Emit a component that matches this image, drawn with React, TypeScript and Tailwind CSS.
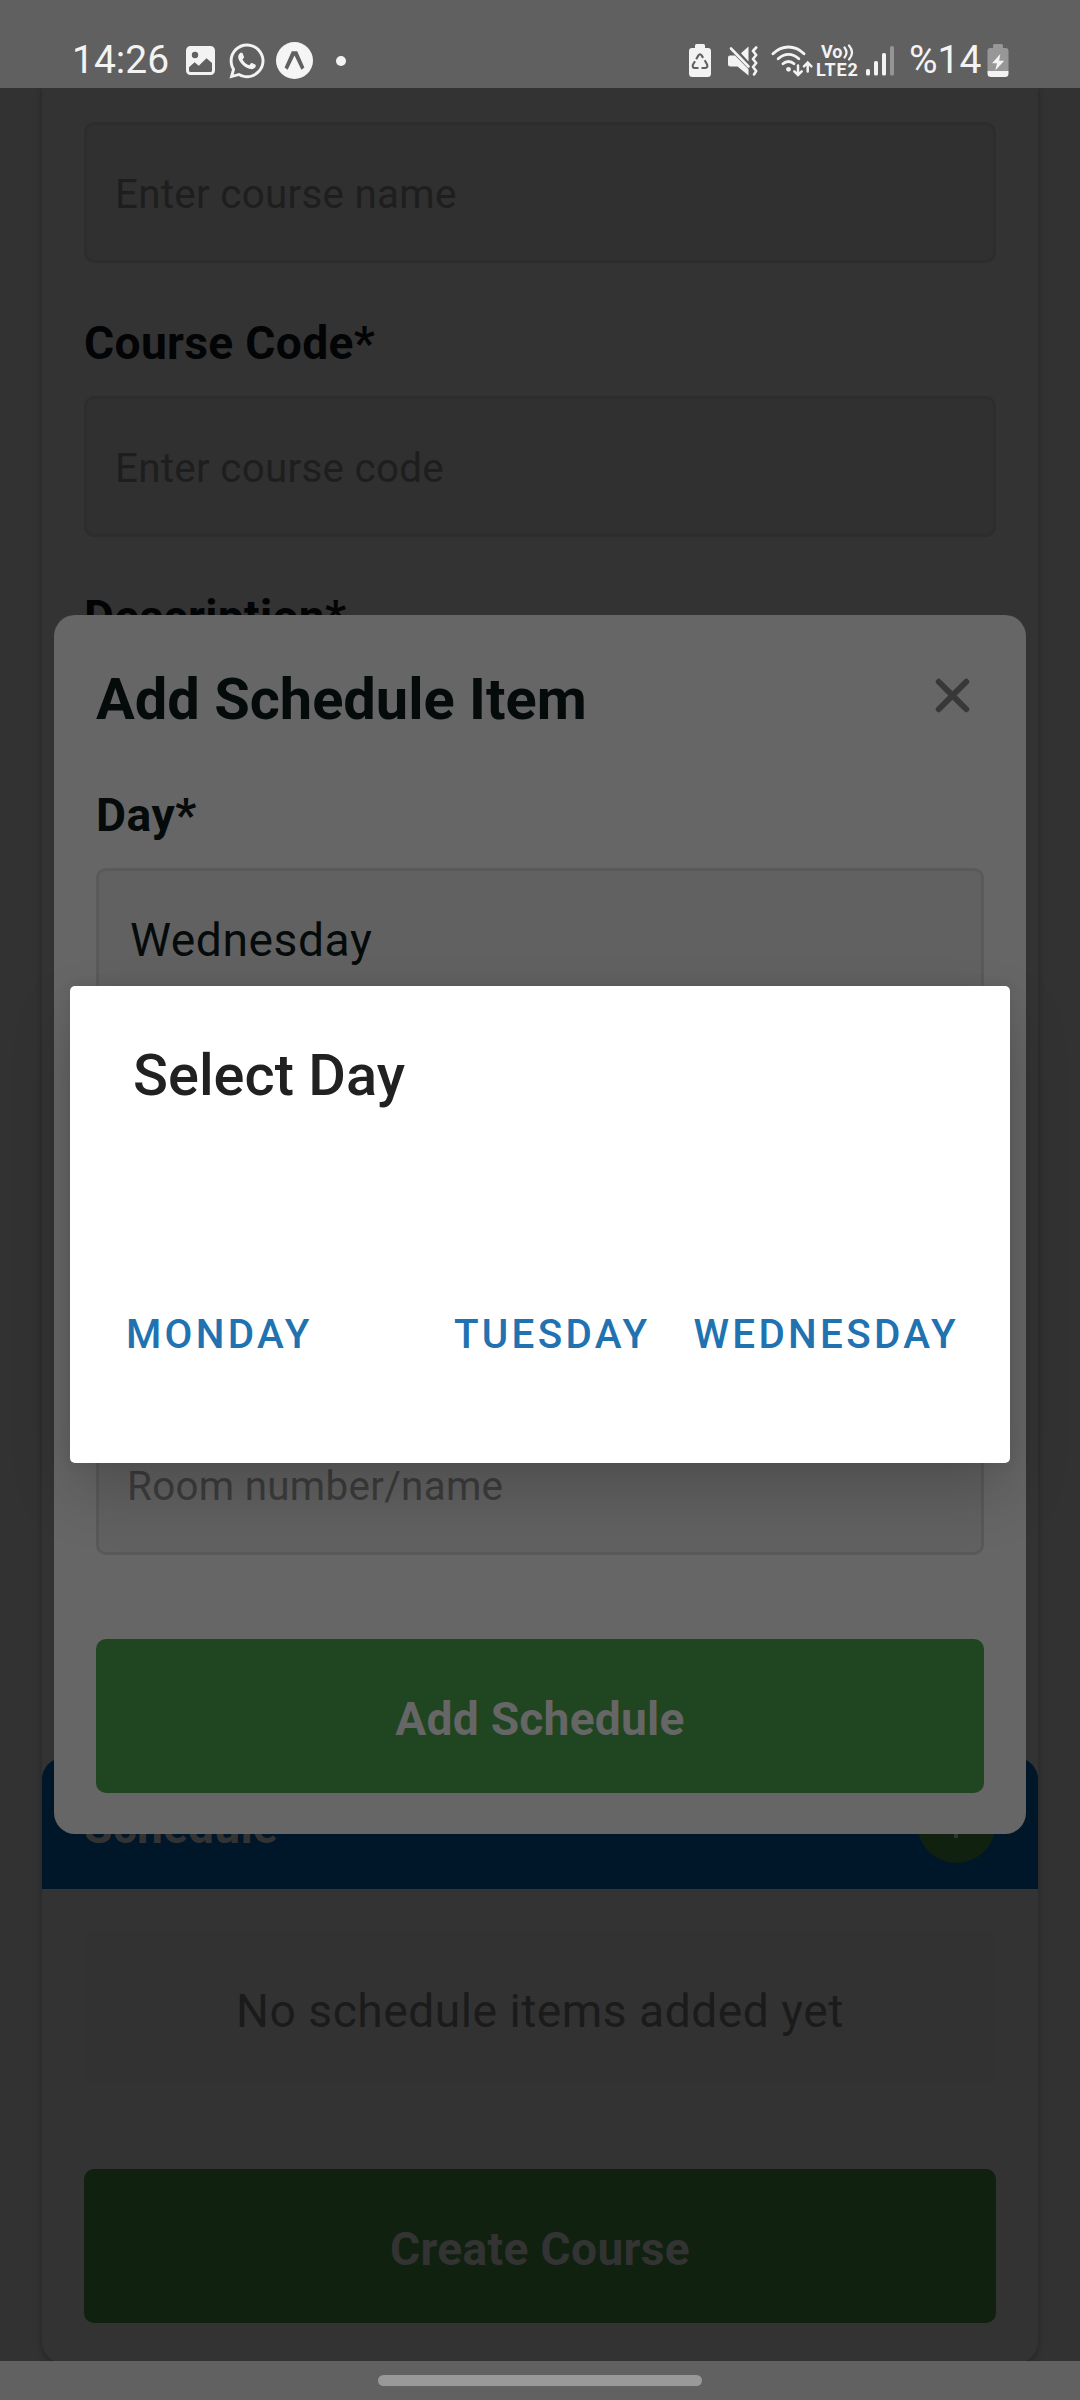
import React from "react";
import { IoClose } from "react-icons/io5";
import { FaWhatsapp } from "react-icons/fa";

function PhotoIcon() {
  return (
    <svg viewBox="0 0 29 29" className="h-[29px] w-[29px]">
      <path
        fillRule="evenodd"
        fill="#f3f3f3"
        d="M4.5 0h20A4.5 4.5 0 0 1 29 4.500v20a4.500 4.500 0 0 1-4.500 4.500h-20A4.500 4.500 0 0 1 0 24.500v-20A4.500 4.500 0 0 1 4.500 0zM9 5.800a3.200 3.200 0 1 0 0 6.400a3.200 3.200 0 0 0 0-6.400zM3 24.500q0 1.500 1.500 1.500h20q1.500 0 1.500-1.500v-7.500l-5.500-4.800l-7.700 7.600l-4.200-3.600L3 21.300z"
      />
    </svg>
  );
}

function ExpoIcon() {
  return (
    <svg viewBox="0 0 37 37" className="h-[37px] w-[37px]">
      <circle cx="18.500" cy="18.500" r="18.500" fill="#f5f5f5" />
      <path
        d="M15.800 9.200h5.400l7.200 16.300l-3 2.200l-6.900-14.200l-6.900 14.200l-3-2.200z"
        fill="#606060"
      />
    </svg>
  );
}

function BatterySaverIcon() {
  return (
    <svg viewBox="0 0 22 33" className="h-[33px] w-[22px]">
      <path
        fill="#f3f3f3"
        d="M7.500 0h7q1.500 0 1.500 1.500V4h3q3 0 3 3v22.500q0 3.500-3.500 3.500h-15Q0 33 0 29.500V7q0-3 3-3h3V1.500Q6 0 7.500 0z"
      />
      <g fill="none" stroke="#606060" strokeWidth="2.100" strokeLinejoin="round">
        <path d="M7.200 15.200l2.200-3.800q1.600-2.200 3.200 0l1.500 2.500" />
        <path d="M15.700 16.300l2.400 4.200q1 3.300-1.900 3.500h-3.700" />
        <path d="M6 17.200l-2.100 3.600q-.9 3 1.900 3.200h3.700" />
      </g>
    </svg>
  );
}

function MuteVibrateIcon() {
  return (
    <svg viewBox="0 0 30 30" className="h-[30px] w-[30px]">
      <path d="M2 9.500h5l13.500 13.800V29.500L9.500 20.500H2.500Q0 20.500 0 18V11.500Q0 9.500 2 9.500z" fill="#f3f3f3" />
      <path d="M20.500 .500V15.500L13 7.200z" fill="#f3f3f3" />
      <path d="M3 2.500L20.500 20.500" stroke="#f3f3f3" strokeWidth="2.600" strokeLinecap="round" />
      <path
        d="M28.200 1.500l-3.200 3.500l3.200 4l-3.200 4l3.200 4l-3.200 4l3.200 4l-2.200 3.500"
        fill="none"
        stroke="#f3f3f3"
        strokeWidth="2.600"
        strokeLinecap="round"
        strokeLinejoin="round"
      />
    </svg>
  );
}

function WifiIcon() {
  return (
    <svg viewBox="0 0 42 32" className="h-[32px] w-[42px]">
      <g fill="none" stroke="#f3f3f3" strokeWidth="2.900" strokeLinecap="round">
        <path d="M2 8.700Q9 2 17.500 2T33 8.700" />
        <path d="M7.200 13.800Q12 9.400 17.500 9.400T27.800 13.800" />
        <path d="M12 18.800Q14.500 16.500 17.500 16.500T23 18.800" />
        <path d="M27 20.500v9M23.300 26.300l3.700 3.700l3.700-3.700" strokeWidth="2.500" />
        <path d="M36.700 26.500v-8.500M33 21.300l3.700-3.700l3.700 3.700" strokeWidth="2.500" />
      </g>
      <circle cx="17.500" cy="24.300" r="2.400" fill="#f3f3f3" />
    </svg>
  );
}

function VolteIcon() {
  return (
    <div className="flex w-[42px] flex-col font-bold text-[#f3f3f3]">
      <div className="flex h-[16px] items-center pl-[4px] text-[18px] leading-[16px]">
        <span>Vo</span>
        <svg viewBox="0 0 11 17" className="h-[17px] w-[11px]">
          <g fill="none" stroke="#f3f3f3" strokeWidth="2.200" strokeLinecap="round">
            <path d="M1.500 3.500q4 5 0 10" />
            <path d="M6 1.500q6 7 0 14" />
          </g>
        </svg>
      </div>
      <div className="-ml-px h-[17px] text-[18px] leading-[19px] tracking-[0.800px]">LTE2</div>
    </div>
  );
}

function SignalIcon() {
  return (
    <svg viewBox="0 0 28 30" className="h-[30px] w-[28px]">
      <rect x="0" y="23" width="4" height="6.500" rx="1.600" fill="#f3f3f3" />
      <rect x="8" y="15" width="4" height="14.500" rx="1.600" fill="#f3f3f3" />
      <rect x="16" y="7" width="4" height="22.500" rx="1.600" fill="#f3f3f3" />
      <rect x="24" y="0" width="4" height="29.500" rx="1.600" fill="#959595" />
    </svg>
  );
}

function ChargingIcon() {
  return (
    <svg viewBox="0 0 22 33" className="h-[33px] w-[22px]">
      <path
        fill="#979797"
        d="M7.500 0h7q1.500 0 1.500 1.500V4h2.500q3 0 3 3v20H.500V7q0-3 3-3H6V1.500Q6 0 7.500 0z"
      />
      <path d="M.500 27h21v2.500q0 3.500-3.500 3.500H4Q.500 33 .500 29.500z" fill="#f3f3f3" />
      <path d="M13.300 10L5 19.200h5L8.300 26.500L17.200 16.800h-5z" fill="#f3f3f3" />
    </svg>
  );
}

function StatusBar() {
  return (
    <header className="flex h-[88px] shrink-0 items-start bg-[#606060] pt-[42px] text-[#f3f3f3]">
      <div className="flex h-[37px] items-center pl-[72px]">
        <span className="w-[114px] text-[39px] leading-[37px]">14:26</span>
        <PhotoIcon />
        <FaWhatsapp className="ml-[12px] h-[40px] w-[40px]" />
        <span className="ml-[9px]">
          <ExpoIcon />
        </span>
        <span className="ml-[23px] h-[10px] w-[10px] rounded-full bg-[#f3f3f3]" />
      </div>
      <div className="ml-auto flex h-[37px] items-center pr-[71px]">
        <BatterySaverIcon />
        <span className="ml-[17px]">
          <MuteVibrateIcon />
        </span>
        <span className="ml-[13px]">
          <WifiIcon />
        </span>
        <span className="ml-[4px]">
          <VolteIcon />
        </span>
        <span className="ml-[7px]">
          <SignalIcon />
        </span>
        <span className="ml-[15px] w-[78px] text-[39px] leading-[37px]">%14</span>
        <ChargingIcon />
      </div>
    </header>
  );
}

function Label({ children }: { children: React.ReactNode }) {
  return (
    <div className="mt-[53px] mb-[26px] h-[54px] text-[46.200px] leading-[54px] font-bold tracking-[0.300px] text-[#030405]">
      {children}
    </div>
  );
}

function Field({ children }: { children: React.ReactNode }) {
  return (
    <div className="flex h-[141px] shrink-0 items-center rounded-[10px] border-[3px] border-[#2d2d2d] bg-[#303030] pt-[5px] pl-[28px] text-[40.400px] tracking-[0.270px] text-[#1e1e1e]">
      {children}
    </div>
  );
}

function CourseForm() {
  return (
    <main className="flex min-h-0 flex-1 flex-col overflow-hidden bg-[#323232] px-[42px]">
      <div className="flex h-[2275px] shrink-0 flex-col rounded-b-[21px] bg-[#333333] shadow-[0_2px_6px_rgba(0,0,0,0.3)]">
        <div className="flex flex-col px-[42px] pt-[34px]">
          <Field>Enter course name</Field>
          <Label>Course Code*</Label>
          <Field>Enter course code</Field>
          <Label>Description*</Label>
        </div>
        <section className="mt-auto flex flex-col">
          <div className="flex h-[131px] items-center justify-between rounded-t-[21px] bg-[#001629] px-[42px]">
            <h2 className="pt-[7px] text-[46.200px] leading-[54px] font-bold tracking-[0.200px] text-[#333333]">
              Schedule
            </h2>
            <span className="flex h-[79px] w-[79px] items-center justify-center rounded-full bg-[#102110]">
              <svg viewBox="0 0 30 30" className="h-[30px] w-[30px]">
                <path d="M14 1v28M1 15h28" stroke="#333333" strokeWidth="4" />
              </svg>
            </span>
          </div>
          <div className="flex flex-col px-[42px] pt-[42px]">
            <div className="flex h-[153px] items-center justify-center rounded-[10px] bg-[#323232] pt-[8px] text-[46.200px] tracking-[0.500px] text-[#1b1b1b]">
              No schedule items added yet
            </div>
            <button className="mt-[85px] mb-[40px] h-[154px] rounded-[10px] bg-[#102110] pt-[8px] text-[46.200px] font-bold tracking-[0.300px] text-[#333333]">
              Create Course
            </button>
          </div>
        </section>
      </div>
    </main>
  );
}

function ScheduleModal() {
  return (
    <div className="absolute top-[615px] left-[54px] flex h-[1219px] w-[972px] flex-col rounded-[21px] bg-[#666666] px-[42px] pt-[49px] pb-[41px] text-[#050a0a]">
      <div className="flex h-[69px] items-start justify-between">
        <h1 className="text-[57.750px] leading-[70px] font-bold">Add Schedule Item</h1>
        <IoClose className="h-[63px] w-[63px] text-[#383838]" />
      </div>
      <div className="mt-[55px] h-[54px] text-[46.200px] leading-[54px] font-bold tracking-[0.500px]">Day*</div>
      <div className="mt-[26px] flex h-[147px] items-center rounded-[10px] border-[3px] border-[#5a5a5a] bg-[#616161] pb-[4px] pl-[31px] text-[46.200px] leading-[54px] tracking-[0.550px]">
        Wednesday
      </div>
      <div className="mt-auto flex h-[141px] items-center rounded-[10px] border-[3px] border-[#595959] bg-[#616161] pt-[5px] pl-[28px] text-[40.400px] tracking-[0.270px] text-[#3c3c3c]">
        Room number/name
      </div>
      <button className="mt-[84px] h-[154px] rounded-[10px] bg-[#1f4521] pt-[8px] text-[46.200px] font-bold tracking-[0.200px] text-[#666666]">
        Add Schedule
      </button>
    </div>
  );
}

function DayDialog() {
  return (
    <div className="absolute top-[986px] left-[70px] flex h-[477px] w-[940px] flex-col rounded-[5px] bg-white shadow-[0_30px_60px_rgba(0,0,0,0.18),0_0_14px_rgba(0,0,0,0.08)]">
      <h2 className="mt-[54px] pl-[63px] text-[57.750px] leading-[70px] font-medium text-[#212121]">Select Day</h2>
      <div className="mt-auto mb-[93px] flex h-[70px] items-center pr-[51px] pl-[56px] text-[40.400px] font-medium tracking-[3.300px] text-[#2072b0]">
        <span>MONDAY</span>
        <span className="ml-auto">TUESDAY</span>
        <span className="ml-[43px]">WEDNESDAY</span>
      </div>
    </div>
  );
}

export default function App() {
  return (
    <div className="relative flex h-[2400px] w-[1080px] flex-col overflow-hidden bg-[#323232] font-[Roboto,sans-serif]">
      <StatusBar />
      <CourseForm />
      <ScheduleModal />
      <DayDialog />
      <footer className="flex h-[39px] shrink-0 justify-center bg-[#616161] pt-[14px]">
        <div className="h-[11px] w-[324px] rounded-full bg-[#999999]" />
      </footer>
    </div>
  );
}
